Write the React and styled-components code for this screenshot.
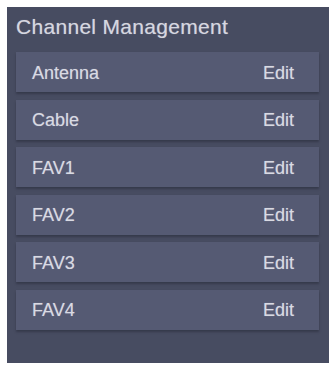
import React from "react";
import styled, { createGlobalStyle } from "styled-components";

const Global = createGlobalStyle`
  html, body { margin: 0; padding: 0; background: #ffffff; }
  body { font-family: "Liberation Sans", Arial, sans-serif; }
`;

const Panel = styled.div`
  box-sizing: border-box;
  margin: 7px 2px 0 7px;
  width: 322px;
  height: 356px;
  background: #474c61;
  padding: 7.5px 10px 0 9px;
  display: flex;
  flex-direction: column;
`;

const Title = styled.div`
  font-size: 21px;
  line-height: 24px;
  letter-spacing: 0.3px;
  color: #d6d7e0;
  padding-left: 0;
  margin-bottom: 13.5px;
  text-shadow: 0 0 1px rgba(220, 221, 230, 0.5);
`;

const List = styled.div`
  display: flex;
  flex-direction: column;
  gap: 7.6px;
`;

const Row = styled.div`
  box-sizing: border-box;
  height: 40px;
  background: #555a73;
  box-shadow: 0 2px 2px rgba(40, 43, 58, 0.55);
  display: flex;
  align-items: center;
  justify-content: space-between;
  padding: 2px 25px 0 16px;
  font-size: 18px;
  color: #d9dae3;
  text-shadow: 0 0 1px rgba(220, 221, 230, 0.45);
`;

const Label = styled.span``;
const Action = styled.span``;

const channels = ["Antenna", "Cable", "FAV1", "FAV2", "FAV3", "FAV4"];

export default function App() {
  return (
    <>
      <Global />
      <Panel>
        <Title>Channel Management</Title>
        <List>
          {channels.map((c) => (
            <Row key={c}>
              <Label>{c}</Label>
              <Action>Edit</Action>
            </Row>
          ))}
        </List>
      </Panel>
    </>
  );
}
